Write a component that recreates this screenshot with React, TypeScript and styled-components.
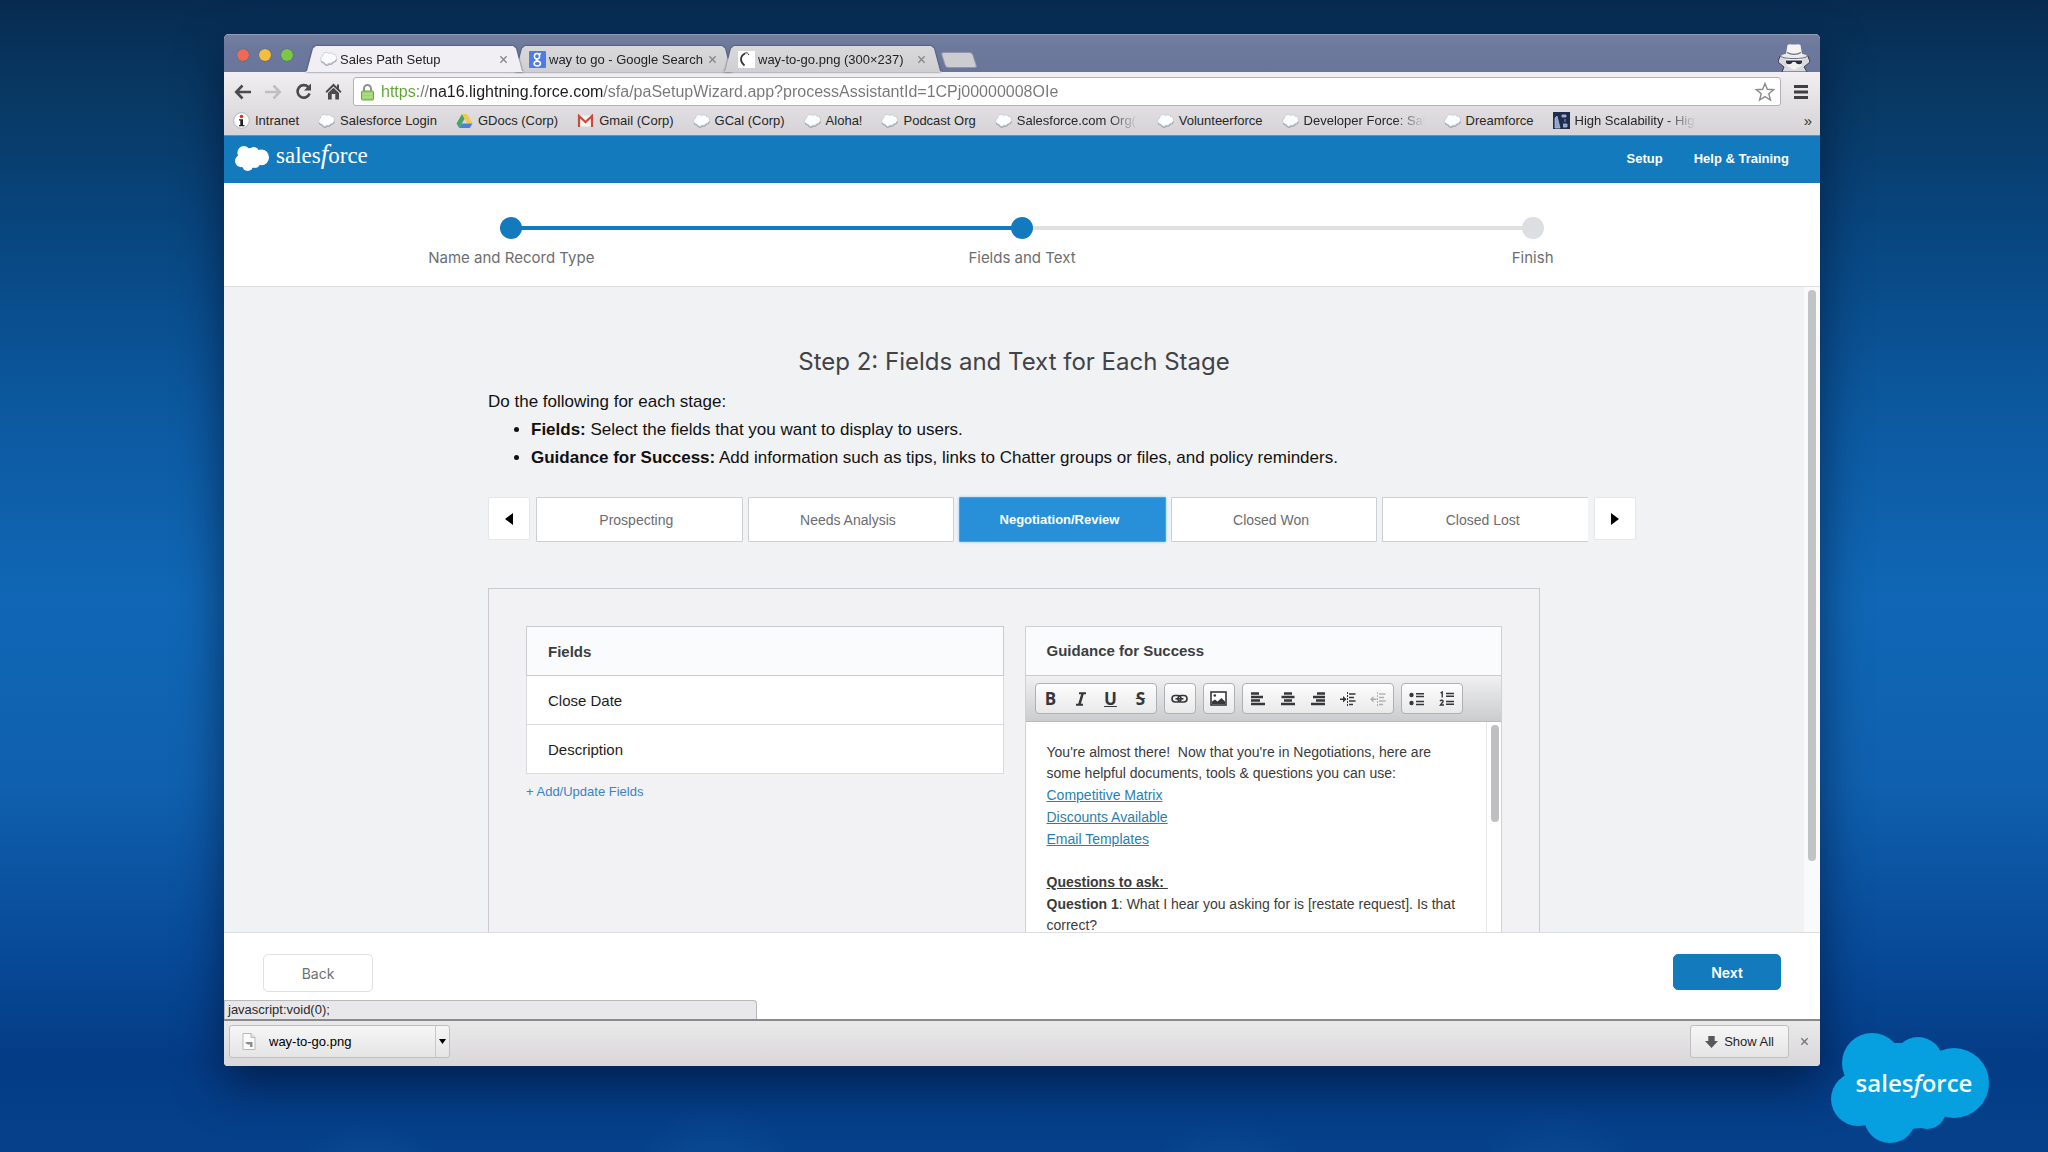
import React from 'react';
import styled, { createGlobalStyle, css } from 'styled-components';

const sans = '"Liberation Sans", Arial, sans-serif';
const brand = 'Inter, "Liberation Sans", sans-serif';
const blue = '#147abe';

const GlobalStyle = createGlobalStyle`
  *, *::before, *::after { box-sizing: border-box; }
  body { margin: 0; font-family: ${sans}; }
  button { font-family: inherit; padding: 0; margin: 0; border: 0; background: none; cursor: pointer; }
  svg { display: block; flex: none; }
`;

const Desktop = styled.div`
  position: relative;
  display: flex;
  height: 100vh;
  padding: 34px 228px 86px 224px;
  background:
    radial-gradient(circle at 18% 104%, rgba(60, 140, 220, 0.09) 0 40px, transparent 80px),
    radial-gradient(circle at 35% 103%, rgba(60, 140, 220, 0.08) 0 44px, transparent 86px),
    radial-gradient(circle at 60% 105%, rgba(60, 140, 220, 0.08) 0 50px, transparent 94px),
    radial-gradient(circle at 76% 103%, rgba(60, 140, 220, 0.07) 0 40px, transparent 84px),
    linear-gradient(#072b50 0%, #083863 8%, #08467f 20%, #0c59a0 36%, #1067b5 52%, #0f60ae 68%, #084b99 82%, #043c86 92%, #05418a 100%);
`;

const Browser = styled.div`
  flex: 1;
  min-width: 0;
  display: flex;
  flex-direction: column;
  overflow: hidden;
  border-radius: 5px 5px 4px 4px;
  background: #fff;
  box-shadow: 0 18px 46px rgba(0, 12, 40, 0.6);
`;

/* ---------- tab strip ---------- */

const TabStrip = styled.div`
  display: flex;
  align-items: flex-end;
  height: 38px;
  padding: 0 9px 0 13px;
  background: linear-gradient(#75809f, #6d799c 30%, #69759a);
  border-top: 1px solid #8d9bb9;
`;

const Lights = styled.div`
  display: flex;
  gap: 10px;
  padding: 0 12px 11px 0;
`;

const Light = styled.span<{ $color: string }>`
  width: 12px;
  height: 12px;
  border-radius: 50%;
  background: ${(p) => p.$color};
  box-shadow: 0 0 1px #3c4660;
`;

const TabList = styled.div`
  display: flex;
`;

const TabEdge = styled.div<{ $active?: boolean }>`
  position: relative;
  z-index: ${(p) => (p.$active ? 2 : 0)};
  width: 219px;
  margin-right: -10px;
  filter: drop-shadow(0 0 1px rgba(40, 46, 70, 0.8));
`;

const Tab = styled.div<{ $active?: boolean }>`
  display: flex;
  align-items: center;
  gap: 3px;
  height: 26px;
  padding: 0 15px;
  font-size: 13px;
  color: #222;
  background: ${(p) => (p.$active ? '#f1eff3' : 'linear-gradient(#d9d9dc, #cfcfd1)')};
  clip-path: polygon(0 100%, 2px 96%, 8px 10%, 11px 0, calc(100% - 11px) 0, calc(100% - 8px) 10%, calc(100% - 2px) 96%, 100% 100%);
`;

const TabTitle = styled.span`
  flex: 1;
  white-space: nowrap;
`;

const TabClose = styled.button`
  display: flex;
  align-items: center;
  width: 10px;
  height: 16px;
  color: #888;
`;

const NewTab = styled.button`
  width: 32px;
  height: 16px;
  margin: 0 0 4px 11px;
  background: #cdcdd1;
  border: 1px solid #9096a8;
  border-radius: 3px;
  transform: skewX(18deg);
`;

const Spacer = styled.div`
  flex: 1;
`;

/* ---------- toolbar ---------- */

const Toolbar = styled.div`
  background: linear-gradient(#f1eff3, #e2e0e2 50%, #d5d3d5);
  border-bottom: 1px solid #7e8a94;
`;

const AddressRow = styled.div`
  display: flex;
  align-items: center;
  padding: 5px 0 0 4px;
`;

const NavButton = styled.button<{ $dim?: boolean }>`
  display: flex;
  justify-content: center;
  align-items: center;
  width: 30px;
  height: 29px;
  color: ${(p) => (p.$dim ? '#c0bfc0' : '#4b4b4b')};
`;

const MenuButton = styled(NavButton)`
  width: 39px;
`;

const Omnibox = styled.div`
  flex: 1;
  display: flex;
  align-items: center;
  height: 29px;
  margin-left: 5px;
  padding: 0 5px 0 6px;
  background: #fff;
  border: 1px solid #b3b1b3;
  border-radius: 3px;
`;

const UrlInput = styled.input`
  flex: 1;
  min-width: 0;
  height: 26px;
  padding: 1px 0 0;
  margin: 0 0 0 6px;
  border: 0;
  outline: 0;
  font: 16px ${sans};
  color: transparent;
  background: linear-gradient(to right, #5da432 35px, #777 35px 48px, #1c1c1c 48px 222px, #777 222px);
  background-clip: text;
  -webkit-background-clip: text;
`;

const Bookmarks = styled.nav`
  display: flex;
  align-items: center;
  gap: 19px;
  height: 29px;
  padding: 0 8px 0 9px;
`;

const Bookmark = styled.a`
  display: flex;
  align-items: center;
  gap: 5px;
  color: #262626;
  font-size: 13px;
  line-height: 16px;
  text-decoration: none;
  white-space: nowrap;
`;

const BookmarkText = styled.span<{ $cut?: boolean }>`
  ${(p) =>
    p.$cut &&
    css`
      width: 121px;
      overflow: hidden;
      mask-image: linear-gradient(to right, #000 75%, transparent 100%);
    `}
`;

const Overflow = styled.button`
  margin-left: auto;
  font-size: 15px;
  line-height: 16px;
  color: #333;
`;

/* ---------- application ---------- */

const AppHeader = styled.header`
  flex: none;
  display: flex;
  align-items: center;
  gap: 7px;
  height: 47px;
  padding: 0 31px 2px 11px;
  background: ${blue};
  color: #fff;
`;

const Wordmark = styled.span`
  padding-bottom: 5px;
  font: 23px/24px "Liberation Serif", serif;
`;

const WordmarkF = styled.em`
  font-size: 27px;
  line-height: 20px;
`;

const HeaderNav = styled.nav`
  display: flex;
  gap: 31px;
  margin-left: auto;
`;

const HeaderLink = styled.a`
  color: #fff;
  font-size: 13px;
  font-weight: 700;
  text-decoration: none;
`;

const Steps = styled.ol`
  flex: none;
  display: grid;
  grid-template-columns: repeat(3, 1fr);
  margin: 0;
  padding: 34px 32px 18px;
  list-style: none;
  border-bottom: 1px solid #dcdee0;
`;

const Step = styled.li<{ $done?: boolean }>`
  position: relative;
  display: flex;
  flex-direction: column;
  align-items: center;
  gap: 9px;
  font: 15px/20px ${brand};
  color: #6c6e71;

  &::before {
    content: '';
    width: 22px;
    height: 22px;
    border-radius: 50%;
    background: ${(p) => (p.$done ? blue : '#dcdee1')};
    z-index: 1;
  }

  &:not(:first-child)::after {
    content: '';
    position: absolute;
    top: 9px;
    right: calc(50% + 10px);
    width: calc(100% - 20px);
    height: 4px;
    background: ${(p) => (p.$done ? blue : '#dfe0e2')};
  }
`;

const Main = styled.main`
  flex: 1;
  min-height: 0;
  display: flex;
  overflow: hidden;
  background: #f1f2f4;
`;

const Scroll = styled.div`
  flex: 1;
  display: flex;
  justify-content: center;
  padding-top: 60px;
`;

const Content = styled.div`
  width: 1052px;
`;

const Gutter = styled.div`
  width: 16px;
  padding: 3px 4px 0;
  background: #fafafb;
`;

const Thumb = styled.div`
  height: 89%;
  border-radius: 4px;
  background: #c1c3c5;
`;

const Title = styled.h1`
  margin: 0 0 11px;
  font: 400 24px/30px ${brand};
  text-align: center;
  color: #414347;
`;

const Intro = styled.div`
  font-size: 17px;
  line-height: 28px;
  color: #111;
`;

const IntroLine = styled.p`
  margin: 0;
`;

const IntroList = styled.ul`
  margin: 0 0 25px;
  padding-left: 43px;
`;

const StageRow = styled.div`
  display: flex;
  align-items: flex-start;
  gap: 6px;
  margin: 0 -96px 46px 0;
`;

const Arrow = styled.button`
  display: flex;
  justify-content: center;
  align-items: center;
  width: 42px;
  height: 43px;
  background: #fff;
  border: 1px solid #e6e7e9;
  border-radius: 2px;
`;

const Stages = styled.div`
  flex: 1;
  display: flex;
  gap: 5px;
`;

const Stage = styled.button<{ $current?: boolean }>`
  flex: 1;
  height: 45px;
  padding-right: 6px;
  font-size: 14px;
  color: #6b6d70;
  background: #fff;
  border: 1px solid #cdcfd3;
  border-radius: 1px;

  &:last-child { border-right: 0; }

  ${(p) =>
    p.$current &&
    css`
      font-size: 13px;
      font-weight: 700;
      color: #fff;
      background: #288fd9;
      border-color: #4f9fe0;
      box-shadow: 0 0 3px #8ccbf5;
    `}
`;

const Panel = styled.section`
  display: grid;
  grid-template-columns: 1fr 1fr;
  align-items: start;
  gap: 21px;
  padding: 37px;
  border: 1px solid #c9cbcf;
  background: #f2f2f5;
`;

const FieldsTable = styled.table`
  width: 100%;
  margin-bottom: 8px;
  border-collapse: collapse;
  font-size: 15px;
  text-align: left;
  background: #fff;

  th, td {
    height: 49px;
    padding: 0 21px;
    border: 1px solid #dadbde;
  }
  th {
    color: #3c3e42;
    background: #fafbfc;
    border-color: #c9cbcf;
  }
  td { color: #1d1d1d; }
`;

const AddLink = styled.a`
  font-size: 13px;
  line-height: 18px;
  color: #3d82c4;
  text-decoration: none;
`;

const Guidance = styled.div`
  border: 1px solid #cfd1d5;
  background: #fff;
`;

const GuidanceTitle = styled.h2`
  margin: 0;
  padding: 0 21px;
  font-size: 15px;
  line-height: 48px;
  color: #3c3e42;
  background: #fafbfc;
  border-bottom: 1px solid #c9cbcf;
`;

const EditorBar = styled.div`
  display: flex;
  gap: 7px;
  height: 46px;
  padding: 7px 9px;
  background: linear-gradient(#f0f0f1, #cbccce);
  border-bottom: 1px solid #b8babd;
`;

const ToolGroup = styled.div`
  display: flex;
  height: 31px;
  border: 1px solid #aeb0b3;
  border-radius: 4px;
  background: linear-gradient(#fdfdfd, #e9e9ea);
`;

const Tool = styled.button<{ $dim?: boolean }>`
  display: flex;
  justify-content: center;
  align-items: center;
  width: 30px;
  height: 29px;
  font: 700 17px "Open Sans", sans-serif;
  color: #35373a;
  opacity: ${(p) => (p.$dim ? 0.35 : 1)};
`;

const EditorBody = styled.div`
  display: flex;
  min-height: 264px;
`;

const EditorText = styled.div`
  flex: 1;
  display: flex;
  flex-direction: column;
  align-items: flex-start;
  gap: 1px;
  padding: 20px 22px 20px 21px;
  font-size: 14px;
  line-height: 21px;
  color: #3b3b3b;
  outline: 0;
`;

const Para = styled.p`
  margin: 0;
`;

const DocLink = styled.a`
  color: #2a7fae;
`;

const QuestionHead = styled.h3`
  margin: 21px 0 0;
  font-size: 14px;
  line-height: 21px;
  text-decoration: underline;
  white-space: pre;
`;

const EditorGutter = styled.div`
  width: 15px;
  padding: 3px 2px 0 4px;
  border-left: 1px solid #e6e6e8;
`;

const EditorThumb = styled.div`
  height: 97px;
  border-radius: 4px;
  background: #bfbfc1;
`;

/* ---------- footer ---------- */

const Footer = styled.footer`
  position: relative;
  flex: none;
  display: flex;
  justify-content: space-between;
  align-items: flex-start;
  height: 87px;
  padding: 21px 39px 0;
  border-top: 1px solid #dcdee0;
  background: #fff;
`;

const FooterButton = styled.button<{ $primary?: boolean }>`
  width: ${(p) => (p.$primary ? 108 : 110)}px;
  height: ${(p) => (p.$primary ? 36 : 38)}px;
  border: 1px solid ${(p) => (p.$primary ? blue : '#dfe0e4')};
  border-radius: 5px;
  font: ${(p) => (p.$primary ? 600 : 400)} 14px ${brand};
  color: ${(p) => (p.$primary ? '#fff' : '#6e7073')};
  background: ${(p) => (p.$primary ? blue : '#fff')};
`;

const StatusBubble = styled.div`
  position: absolute;
  left: 0;
  bottom: 0;
  width: 533px;
  padding: 0 3px;
  font-size: 13px;
  line-height: 18px;
  color: #2a2a2a;
  background: #e8e7e9;
  border: 1px solid #b9b8ba;
  border-bottom: 0;
  border-radius: 0 4px 0 0;
`;

const Shelf = styled.div`
  flex: none;
  display: flex;
  align-items: flex-start;
  height: 47px;
  padding: 4px 6px 0 5px;
  border-top: 2px solid #8a8a8c;
  background: linear-gradient(#eae9ea, #d9d7d9);
`;

const shelfButton = css`
  display: flex;
  align-items: center;
  height: 33px;
  border: 1px solid #bfbec0;
  border-radius: 3px;
  background: linear-gradient(#f6f6f6, #e6e5e6);
  font-size: 13px;
  color: #1f1f1f;
`;

const Download = styled.div`
  ${shelfButton}
  width: 221px;
`;

const DownloadOpen = styled.button`
  flex: 1;
  display: flex;
  align-items: center;
  gap: 13px;
  height: 31px;
  padding-left: 12px;
  font-size: 13px;
`;

const DownloadMenu = styled.button`
  display: flex;
  justify-content: center;
  align-items: center;
  width: 14px;
  height: 31px;
  border-left: 1px solid #c9c8ca;
`;

const ShowAll = styled.button`
  ${shelfButton}
  gap: 6px;
  padding: 0 14px;
`;

const ShelfClose = styled.button`
  display: flex;
  justify-content: center;
  align-items: center;
  width: 20px;
  height: 33px;
  margin-left: 5px;
  color: #77777a;
`;

const Watermark = styled.div`
  position: absolute;
  right: 59px;
  bottom: 9px;
  display: grid;
  place-items: center;

  > * { grid-area: 1 / 1; }
`;

const WatermarkText = styled.span`
  padding: 0 0 11px 8px;
  font: 600 24px/30px "Open Sans", sans-serif;
  color: #f4fbff;
`;

/* ---------- drawings ---------- */

const Cloud = ({ width, height, fill }: { width: number; height: number; fill: string }) => (
  <svg width={width} height={height} viewBox="0 0 158 110" fill={fill} preserveAspectRatio="none" aria-hidden>
    <circle cx="41" cy="30" r="30" />
    <circle cx="87" cy="29" r="25" />
    <circle cx="123" cy="50" r="35" />
    <circle cx="96" cy="77" r="19" />
    <circle cx="59" cy="84" r="26" />
    <circle cx="27" cy="66" r="27" />
    <path d="M30 40 58 10 76 10 112 20 120 75 100 94 80 96 30 92Z" />
  </svg>
);

const CloudFavicon = () => (
  <svg width="17" height="16" viewBox="0 0 17 16" aria-hidden>
    <path
      d="M3.600 2.500C5.200.8 7.500 1.200 8.600 2.600 10.200 1.200 12.300 1.600 13 3.200 15.300 3 16.700 5 16.500 7.200 16.200 9.600 14.600 10.900 12.800 10.700 12 12.400 10 12.900 8.800 12 7.500 14.200 4.600 13.800 4 11.400 1.600 11.500.3 9.500.8 7.500 1 6.200 1.700 5.500 2.600 5.200 2.500 4.200 2.900 3.200 3.600 2.500Z"
      fill="#fbfcfd"
      stroke="#c3c8ce"
      strokeWidth=".8"
    />
    <path d="M1.200 10C2 12 3.400 12 4 12 5.200 14.800 8 15 9.200 13 11 13.600 12.600 12.800 13.200 11.500 15 11.300 16.200 10 16.500 8.500" fill="none" stroke="#a2a9b2" strokeWidth="1.200" />
  </svg>
);

const GoogleFavicon = () => (
  <svg width="17" height="17" viewBox="0 0 17 17" aria-hidden>
    <rect width="17" height="17" rx="1" fill="#4f7be6" />
    <g fill="none" stroke="#fff" strokeWidth="1.500">
      <ellipse cx="8" cy="5.300" rx="2.600" ry="2.700" />
      <ellipse cx="8.300" cy="12.600" rx="3.200" ry="2.400" />
      <path d="M10 3.500 12 2.300M7.500 8C6.500 9 8 9.500 9.500 10.500" />
    </g>
  </svg>
);

const ImageFavicon = () => (
  <svg width="17" height="17" viewBox="0 0 17 17" aria-hidden>
    <rect width="17" height="17" fill="#fff" />
    <path d="M7 2.500C1.500 5.500 2 11 6.500 14.500" fill="none" stroke="#333" strokeWidth="1.700" />
    <path d="M6.500 2.300C9 1 10.500 2.500 10.800 4" fill="none" stroke="#333" strokeWidth="1" />
  </svg>
);

const InfoIcon = () => (
  <svg width="17" height="17" viewBox="0 0 17 17" aria-hidden>
    <circle cx="8.500" cy="8.500" r="7.800" fill="#fff" stroke="#b5b5b5" />
    <circle cx="8.500" cy="4.500" r="1.800" fill="#d8322a" />
    <path d="M6 7.200H10V13H11.500V14.300H6V13H7.300V8.500H6Z" fill="#222" />
  </svg>
);

const DriveIcon = () => (
  <svg width="17" height="16" viewBox="0 0 17 16" aria-hidden>
    <path d="M6 1 .5 10.500 3.200 15 8.700 5.500Z" fill="#46a36b" />
    <path d="M6 1H11L16.500 10.500H11.200Z" fill="#f2c94a" />
    <path d="M5.800 10.500H16.500L13.800 15H3.200Z" fill="#4b80d6" />
  </svg>
);

const MailIcon = () => (
  <svg width="17" height="14" viewBox="0 0 17 14" aria-hidden>
    <path d="M2 1.500H15V12.500H2Z" fill="#f6f2f0" />
    <path d="M2 13V2L8.500 8 15 2V13" fill="none" stroke="#c94b3e" strokeWidth="2.200" />
  </svg>
);

const ScaleIcon = () => (
  <svg width="17" height="17" viewBox="0 0 17 17" aria-hidden>
    <rect width="17" height="17" fill="#1f2c4b" />
    <path d="M2 16V6L4 4 5 8 7 16ZM9 3H13V5H9ZM12 7V10M10 12H14V15H10" fill="#8fa5cf" stroke="#a9badc" strokeWidth=".8" />
  </svg>
);

const Incognito = () => (
  <svg width="34" height="30" viewBox="0 0 34 30" aria-hidden>
    <path d="M5 30 7 25 1 20 3 14 31 14 33 20 27 25 30 30Z" fill="#d9dadd" stroke="#3b4258" strokeWidth="1" />
    <path d="M9 15H25L24 24 17 28 10 24Z" fill="#f2f2f3" />
    <path d="M3 14C8 9 26 9 31 14 27 17.500 7 17.500 3 14Z" fill="#e9eaec" stroke="#6a7084" strokeWidth="1" />
    <path d="M9 12 10.500 3C13 1.500 15 3 17 2.500 19 3 21 1.500 23.500 3L25 12C20 14.500 14 14.500 9 12Z" fill="#f4f4f5" />
    <path d="M10 10.500C14 13 20 13 24 10.500" fill="none" stroke="#6c7183" strokeWidth="1.200" />
    <path d="M9 18.500H25V20C25 23 19.500 23 18.500 20H15.500C14.500 23 9 23 9 20Z" fill="#2c2f3a" />
  </svg>
);

const stroke = { fill: 'none', stroke: 'currentColor' } as const;

const ArrowLeft = () => (
  <svg width="18" height="16" viewBox="0 0 18 16" strokeWidth="2.600" {...stroke} aria-hidden>
    <path d="M8.500 1.500 2.200 8 8.500 14.500M2.500 8H17" />
  </svg>
);

const ArrowRight = () => (
  <svg width="18" height="16" viewBox="0 0 18 16" strokeWidth="2.600" {...stroke} aria-hidden>
    <path d="M9.500 1.500 15.800 8 9.500 14.500M15.500 8H1" />
  </svg>
);

const Reload = () => (
  <svg width="17" height="17" viewBox="0 0 17 17" aria-hidden>
    <path d="M13.200 4A6.200 6.200 0 1 0 14.600 10.500" strokeWidth="2.600" {...stroke} />
    <path d="M9 7.500H16V.5Z" fill="currentColor" />
  </svg>
);

const Home = () => (
  <svg width="17" height="17" viewBox="0 0 17 17" fill="currentColor" aria-hidden>
    <path d="M8.500.5 12 4V1.500H14V6L16.500 8.600 15.300 10 8.500 3.400 1.700 10 .5 8.600Z" />
    <path d="M3 10 8.500 4.800 14 10V16.500H10.300V11H6.700V16.500H3Z" />
  </svg>
);

const Lock = () => (
  <svg width="15" height="18" viewBox="0 0 15 18" aria-hidden>
    <path d="M4 9V5.500A3.500 3.500 0 0 1 11 5.500V9" fill="none" stroke="#8f9491" strokeWidth="2" />
    <rect x="1.500" y="8" width="12" height="9" rx="1" fill="#9bd46d" stroke="#69a93f" />
    <path d="M2.500 11H12.500M2.500 14H12.500" stroke="#b9e59a" strokeWidth="1" />
  </svg>
);

const Star = () => (
  <svg width="20" height="20" viewBox="0 0 20 20" aria-hidden>
    <path d="M10 1.500 12.300 7.300 18.600 7.700 13.800 11.700 15.400 18 10 14.600 4.600 18 6.200 11.700 1.400 7.700 7.700 7.300Z" fill="#fff" stroke="#8b8b8b" strokeWidth="1.400" />
  </svg>
);

const Menu = () => (
  <svg width="14" height="14" viewBox="0 0 14 14" aria-hidden>
    <path d="M0 1.500H14M0 7H14M0 12.500H14" stroke="#3f3f3f" strokeWidth="2.800" />
  </svg>
);

const Cross = ({ size }: { size: number }) => (
  <svg width={size} height={size} viewBox="0 0 10 10" strokeWidth="1.500" {...stroke} aria-hidden>
    <path d="M1.500 1.500 8.500 8.500M8.500 1.500 1.500 8.500" />
  </svg>
);

const Triangle = ({ d, w, h }: { d: string; w: number; h: number }) => (
  <svg width={w} height={h} viewBox={`0 0 ${w} ${h}`} fill="#000" aria-hidden>
    <path d={d} />
  </svg>
);

const Lines = ({ d }: { d: string }) => (
  <svg width="16" height="16" viewBox="0 0 16 16" aria-hidden>
    <path d={d} strokeWidth="2.400" {...stroke} />
  </svg>
);

const Italic = () => (
  <svg width="12" height="14" viewBox="0 0 12 14" fill="none" stroke="currentColor" aria-hidden>
    <path d="M4 1.200H11M1 12.800H8" strokeWidth="2" />
    <path d="M7.800 1 4.200 13" strokeWidth="2.600" />
  </svg>
);

const LinkIcon = () => (
  <svg width="17" height="10" viewBox="0 0 17 10" strokeWidth="1.600" {...stroke} aria-hidden>
    <rect x="1" y="1.500" width="9" height="6.500" rx="3.200" />
    <rect x="7" y="1.500" width="9" height="6.500" rx="3.200" />
    <path d="M4.500 4.800H12.500" />
  </svg>
);

const PictureIcon = () => (
  <svg width="17" height="15" viewBox="0 0 17 15" aria-hidden>
    <rect x="1" y="1" width="15" height="13" fill="#fff" strokeWidth="1.600" stroke="currentColor" />
    <path d="M2 13V10.500L5 8.500 7.500 10.500 11.500 7 15 10.500V13Z" fill="currentColor" />
    <circle cx="4.800" cy="4.500" r="1.300" fill="currentColor" />
  </svg>
);

const IndentIcon = ({ d }: { d: string }) => (
  <svg width="16" height="16" viewBox="0 0 16 16" aria-hidden>
    <path d="M7.500 1V15" strokeWidth="1" strokeDasharray="2 1" {...stroke} />
    <path d="M9 3H15.500M9 6.500H14M9 10H15.500M9 13.500H13" strokeWidth="1.500" {...stroke} />
    <path d={d} fill="currentColor" />
  </svg>
);

const BulletIcon = () => (
  <svg width="16" height="14" viewBox="0 0 16 14" aria-hidden>
    <circle cx="2.500" cy="3" r="2.200" fill="currentColor" />
    <circle cx="2.500" cy="11" r="2.200" fill="currentColor" />
    <path d="M7 1.800H15M7 4.600H15M7 9.600H15M7 12.400H15" strokeWidth="1.500" {...stroke} />
  </svg>
);

const NumberIcon = () => (
  <svg width="16" height="16" viewBox="0 0 16 16" aria-hidden>
    <path d="M1.500 2 3.200 1V6.500M1 10C2 8.700 4.500 9 4 10.800L1.500 14H5" strokeWidth="1.400" {...stroke} />
    <path d="M7 2.500H15M7 5.300H15M7 10.500H15M7 13.300H15" strokeWidth="1.500" {...stroke} />
  </svg>
);

const FileIcon = () => (
  <svg width="14" height="17" viewBox="0 0 14 17" aria-hidden>
    <path d="M1 .5H9L13 4.500V16.500H1Z" fill="#fafafa" stroke="#b8b8ba" />
    <path d="M9 .5V4.500H13" fill="#e4e4e6" stroke="#b8b8ba" />
    <path d="M3.500 9H10.500V14H8V11.500H6L4 10.500Z" fill="#8e8e92" />
  </svg>
);

const DownArrow = () => (
  <svg width="13" height="12" viewBox="0 0 13 12" fill="#58585a" aria-hidden>
    <path d="M3.300 0H9.700V5H13L6.500 12 0 5H3.300Z" />
  </svg>
);

/* ---------- data ---------- */

const tabs = [
  { title: 'Sales Path Setup', icon: <CloudFavicon />, active: true },
  { title: 'way to go - Google Search', icon: <GoogleFavicon /> },
  { title: 'way-to-go.png (300×237)', icon: <ImageFavicon /> },
];

const bookmarks = [
  { label: 'Intranet', icon: <InfoIcon /> },
  { label: 'Salesforce Login' },
  { label: 'GDocs (Corp)', icon: <DriveIcon /> },
  { label: 'Gmail (Corp)', icon: <MailIcon /> },
  { label: 'GCal (Corp)' },
  { label: 'Aloha!' },
  { label: 'Podcast Org' },
  { label: 'Salesforce.com Org(', cut: true },
  { label: 'Volunteerforce' },
  { label: 'Developer Force: Sal', cut: true },
  { label: 'Dreamforce' },
  { label: 'High Scalability - Hig', icon: <ScaleIcon />, cut: true },
];

const stages = ['Prospecting', 'Needs Analysis', 'Negotiation/Review', 'Closed Won', 'Closed Lost'];

const toolGroups: { label: string; glyph: React.ReactNode; dim?: boolean }[][] = [
  [
    { label: 'Bold', glyph: 'B' },
    { label: 'Italic', glyph: <Italic /> },
    { label: 'Underline', glyph: <u>U</u> },
    { label: 'Strikethrough', glyph: <s>S</s> },
  ],
  [{ label: 'Link', glyph: <LinkIcon /> }],
  [{ label: 'Image', glyph: <PictureIcon /> }],
  [
    { label: 'Align left', glyph: <Lines d="M1 2.500H9M1 6H13M1 9.500H10M1 13H15" /> },
    { label: 'Align center', glyph: <Lines d="M4 2.500H12M1.500 6H14.500M4 9.500H12M1 13H15" /> },
    { label: 'Align right', glyph: <Lines d="M7 2.500H15M3 6H15M6 9.500H15M1 13H15" /> },
    { label: 'Indent', glyph: <IndentIcon d="M0 7.500H3V5L6.500 8.200 3 11.500V9H0Z" /> },
    { label: 'Outdent', glyph: <IndentIcon d="M6.500 7.500H3.500V5L0 8.200 3.500 11.500V9H6.500Z" />, dim: true },
  ],
  [
    { label: 'Bulleted list', glyph: <BulletIcon /> },
    { label: 'Numbered list', glyph: <NumberIcon /> },
  ],
];

export default function App() {
  return (
    <Desktop>
      <GlobalStyle />
      <Browser>
        <TabStrip>
          <Lights>
            <Light $color="#ec6a58" />
            <Light $color="#f4bf3c" />
            <Light $color="#7cc743" />
          </Lights>
          <TabList>
            {tabs.map((t) => (
              <TabEdge key={t.title} $active={t.active}>
                <Tab $active={t.active}>
                  {t.icon}
                  <TabTitle>{t.title}</TabTitle>
                  <TabClose aria-label={`Close ${t.title}`}>
                    <Cross size={9} />
                  </TabClose>
                </Tab>
              </TabEdge>
            ))}
          </TabList>
          <NewTab aria-label="New tab" />
          <Spacer />
          <Incognito />
        </TabStrip>

        <Toolbar>
          <AddressRow>
            <NavButton aria-label="Back one page"><ArrowLeft /></NavButton>
            <NavButton aria-label="Forward one page" $dim><ArrowRight /></NavButton>
            <NavButton aria-label="Reload"><Reload /></NavButton>
            <NavButton aria-label="Home"><Home /></NavButton>
            <Omnibox>
              <Lock />
              <UrlInput
                aria-label="Address"
                defaultValue="https://na16.lightning.force.com/sfa/paSetupWizard.app?processAssistantId=1CPj00000008OIe"
              />
              <Star />
            </Omnibox>
            <MenuButton aria-label="Menu"><Menu /></MenuButton>
          </AddressRow>
          <Bookmarks aria-label="Bookmarks">
            {bookmarks.map((b) => (
              <Bookmark key={b.label} href="#">
                {b.icon ?? <CloudFavicon />}
                <BookmarkText $cut={b.cut}>{b.label}</BookmarkText>
              </Bookmark>
            ))}
            <Overflow aria-label="More bookmarks">»</Overflow>
          </Bookmarks>
        </Toolbar>

        <AppHeader>
          <Cloud width={34} height={25} fill="#fff" />
          <Wordmark>sales<WordmarkF>f</WordmarkF>orce</Wordmark>
          <HeaderNav>
            <HeaderLink href="#">Setup</HeaderLink>
            <HeaderLink href="#">Help &amp; Training</HeaderLink>
          </HeaderNav>
        </AppHeader>

        <Steps>
          <Step $done>Name and Record Type</Step>
          <Step $done>Fields and Text</Step>
          <Step>Finish</Step>
        </Steps>

        <Main>
          <Scroll>
            <Content>
              <Title>Step 2: Fields and Text for Each Stage</Title>
              <Intro>
                <IntroLine>Do the following for each stage:</IntroLine>
                <IntroList>
                  <li><b>Fields:</b> Select the fields that you want to display to users.</li>
                  <li><b>Guidance for Success:</b> Add information such as tips, links to Chatter groups or files, and policy reminders.</li>
                </IntroList>
              </Intro>
              <StageRow>
                <Arrow aria-label="Previous stages"><Triangle w={8} h={12} d="M8 0V12L0 6Z" /></Arrow>
                <Stages>
                  {stages.map((s) => (
                    <Stage key={s} $current={s === 'Negotiation/Review'}>{s}</Stage>
                  ))}
                </Stages>
                <Arrow aria-label="Next stages"><Triangle w={8} h={12} d="M0 0V12L8 6Z" /></Arrow>
              </StageRow>
              <Panel>
                <div>
                  <FieldsTable>
                    <thead><tr><th scope="col">Fields</th></tr></thead>
                    <tbody>
                      <tr><td>Close Date</td></tr>
                      <tr><td>Description</td></tr>
                    </tbody>
                  </FieldsTable>
                  <AddLink href="#">+ Add/Update Fields</AddLink>
                </div>
                <Guidance>
                  <GuidanceTitle>Guidance for Success</GuidanceTitle>
                  <EditorBar role="toolbar" aria-label="Formatting">
                    {toolGroups.map((group) => (
                      <ToolGroup key={group[0].label}>
                        {group.map((t) => (
                          <Tool key={t.label} aria-label={t.label} $dim={t.dim}>{t.glyph}</Tool>
                        ))}
                      </ToolGroup>
                    ))}
                  </EditorBar>
                  <EditorBody>
                    <EditorText role="textbox" aria-multiline aria-label="Guidance text">
                      <Para>You're almost there!&nbsp; Now that you're in Negotiations, here are some helpful documents, tools &amp; questions you can use:</Para>
                      <DocLink href="#">Competitive Matrix</DocLink>
                      <DocLink href="#">Discounts Available</DocLink>
                      <DocLink href="#">Email Templates</DocLink>
                      <QuestionHead>{'Questions to ask: '}</QuestionHead>
                      <Para><b>Question 1</b>: What I hear you asking for is [restate request]. Is that correct?</Para>
                    </EditorText>
                    <EditorGutter><EditorThumb /></EditorGutter>
                  </EditorBody>
                </Guidance>
              </Panel>
            </Content>
          </Scroll>
          <Gutter><Thumb /></Gutter>
        </Main>

        <Footer>
          <FooterButton>Back</FooterButton>
          <FooterButton $primary>Next</FooterButton>
          <StatusBubble>javascript:void(0);</StatusBubble>
        </Footer>

        <Shelf>
          <Download>
            <DownloadOpen><FileIcon />way-to-go.png</DownloadOpen>
            <DownloadMenu aria-label="Download options"><Triangle w={7} h={5} d="M0 0H7L3.500 5Z" /></DownloadMenu>
          </Download>
          <Spacer />
          <ShowAll><DownArrow />Show All</ShowAll>
          <ShelfClose aria-label="Close downloads"><Cross size={9} /></ShelfClose>
        </Shelf>
      </Browser>
      <Watermark>
        <Cloud width={158} height={110} fill="#069fe0" />
        <WatermarkText>sales<em>f</em>orce</WatermarkText>
      </Watermark>
    </Desktop>
  );
}
